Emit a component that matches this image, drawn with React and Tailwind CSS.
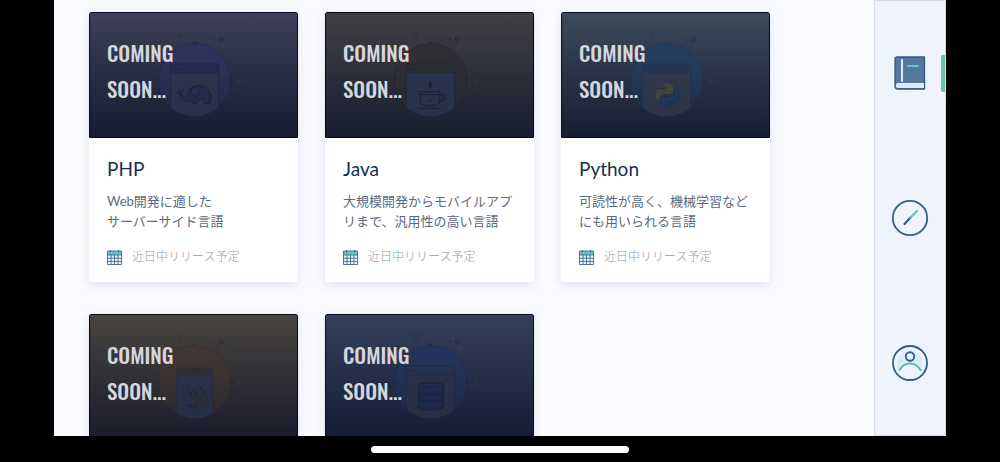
import React from "react";

function Elephant() {
  return (
    <g fill="#262c50" stroke="#191e3b" strokeWidth="1" strokeLinejoin="round">
      <path d="M98 84 C99 75 106 73 112 74 C119 75 122 80 122 86 L121 92 H116 L115 87 Q111 89 108 87 L108 92 H104 L103 88 C99 91 93 90 90 82 L92 81 C94 86 97 87 98 84Z" />
      <path d="M103 76 Q109 73 110 80 Q109 86 104 84 Q101 82 103 76Z" fill="#2b3055" />
      <path d="M121 81 L123 85" fill="none" />
      <path d="M91 81 L87 81 M91 81 L90 77 M92 81 L94 78" fill="none" strokeLinecap="round" />
    </g>
  );
}

function Cup() {
  return (
    <g fill="none" stroke="#1c2135" strokeWidth="1.3" strokeLinejoin="round" strokeLinecap="round">
      <path d="M95 80 H115 V88 Q115 94 109 94 H101 Q95 94 95 88Z" fill="#313650" />
      <path d="M95 83 H115 M115 83 Q120 82 120 86 Q119 90 114 90" />
      <path d="M95 97 H116" />
      <circle cx="105" cy="89" r="1.4" fill="#1c2135" stroke="none" />
      <path d="M105.500 69 C102 73 104 74 105.500 77.500 C108 74 107 72 105.500 69Z" fill="#1c2135" stroke="none" />
    </g>
  );
}

function Snakes() {
  return (
    <g strokeWidth="0.8">
      <path
        d="M100 72 Q106 69 111 72 Q113 73 113 76 V80 Q113 83 110 83 H103 Q99 83 99 87 V89 Q93 89 94 82 Q94 77 98 77 H105 V76 H99 Q98 73 100 72Z"
        fill="#4c4d3d"
        stroke="#27303d"
      />
      <path
        d="M112 95 Q106 98 101 95 Q99 94 99 91 V88 Q99 85 102 85 H109 Q113 85 113 81 V78 Q120 77 120 84 Q120 90 115 90 H107 V91 H113 Q114 94 112 95Z"
        fill="#223b60"
        stroke="#1c3153"
      />
      <circle cx="102" cy="74" r="0.900" fill="#1b2944" />
      <circle cx="110" cy="93" r="0.900" fill="#1b2944" />
    </g>
  );
}

function Bird() {
  return (
    <g fill="#2b2e3e" stroke="#22253b" strokeWidth="1" strokeLinejoin="round" strokeLinecap="round">
      <path d="M99 77 L110 85 L103 76 L114 84 Q114 78 111 73 Q121 79 118 90 L120 93 Q117 92 114 93 Q105 97 98 91 Q105 93 109 90 Q102 85 99 77Z" />
      <path d="M92 72 L97 77 M97 71 L102 75 M92 77 L95 80" fill="none" />
    </g>
  );
}

function Database() {
  return (
    <g fill="#1d2b50" stroke="#14203f" strokeWidth="1.1">
      <path d="M93 71 V94 Q106 99 119 94 V71Z" />
      <ellipse cx="106" cy="71" rx="13" ry="2" />
      <path d="M93 79 Q106 83 119 79 M93 86 Q106 90 119 86" fill="none" />
    </g>
  );
}

function Illustration({ id, disc, line, bar, page, phone, children }) {
  const x = phone ? 87 : 81;
  const w = phone ? 37 : 49;
  const y = phone ? 54 : 52;
  return (
    <svg viewBox="0 0 209 126" aria-hidden="true" className="absolute inset-0 h-full w-full opacity-75">
      <defs>
        <clipPath id={"disc-" + id}>
          <circle cx="105.500" cy="68" r="37" />
        </clipPath>
        <linearGradient id={"fade-" + id} x1="0" y1="0" x2="0" y2="1">
          <stop offset="0" stopColor={disc} />
          <stop offset="1" stopColor={disc} stopOpacity="0.350" />
        </linearGradient>
      </defs>
      <circle cx="105.500" cy="68" r="37" fill={"url(#fade-" + id + ")"} stroke={line} strokeOpacity="0.600" />
      <g clipPath={"url(#disc-" + id + ")"}>
        <rect x={x} y={y} width={w} height="60" rx="1" fill={page} stroke={line} strokeOpacity="0.600" />
        <rect x={x} y={y} width={w} height={phone ? 6 : 9} fill={bar} stroke={line} strokeOpacity="0.500" strokeWidth="0.800" />
        <path
          d={phone ? "M99 57 H101 M104 57 H112" : "M84 56.500 H86 M87.500 56.500 H89.500 M91 56.500 H93"}
          stroke={line}
          strokeWidth="1.2"
        />
      </g>
      {children}
      <g fill="none" stroke={line} strokeOpacity="0.800">
        <circle cx="90.700" cy="23.300" r="2.200" strokeOpacity="0.500" />
        <circle cx="132.700" cy="27" r="2" strokeWidth="1.200" />
      </g>
      <g fill={line}>
        <circle cx="105.700" cy="30.500" r="1.300" />
        <circle cx="125.300" cy="27.300" r="1" />
        <circle cx="69" cy="68" r="1.300" />
        <circle cx="142" cy="68" r="1.300" />
        <circle cx="150" cy="81.700" r="1.500" fillOpacity="0.700" />
      </g>
      <path d="M134.500 31 V37 M131.500 34 H137.500 M151 66 V72 M148 69 H154" stroke="#66708a" strokeOpacity="0.140" strokeWidth="1.500" />
    </svg>
  );
}

const courses = [
  {
    id: "php",
    title: "PHP",
    lines: ["Web開発に適した", "サーバーサイド言語"],
    cover: "border-[#0a0c25] bg-linear-to-b from-[#3d4057] to-[#171c33]",
    art: { disc: "#2e3260", line: "#1a1f40", bar: "#242950", page: "#303550" },
    Drawing: Elephant,
  },
  {
    id: "java",
    title: "Java",
    lines: ["大規模開発からモバイルアプリまで、汎用性の高い言語"],
    cover: "border-[#07080f] bg-linear-to-b from-[#414043] to-[#181d30]",
    art: { disc: "#302c31", line: "#201f28", bar: "#2b2a34", page: "#2a3654" },
    Drawing: Cup,
  },
  {
    id: "python",
    title: "Python",
    lines: ["可読性が高く、機械学習などにも用いられる言語"],
    cover: "border-[#080c24] bg-linear-to-b from-[#3c4a5c] to-[#171e34]",
    art: { disc: "#1f3e66", line: "#1b3052", bar: "#203756", page: "#34394d" },
    Drawing: Snakes,
  },
  {
    id: "swift",
    cover: "border-[#0a0a0e] bg-linear-to-b from-[#48443f] to-[#1b1c2c]",
    art: { disc: "#42362f", line: "#2c2829", bar: "#302f38", page: "#29324f", phone: true },
    Drawing: Bird,
  },
  {
    id: "database",
    cover: "border-[#080c26] bg-linear-to-b from-[#35405b] to-[#161d35]",
    art: { disc: "#1f3462", line: "#182747", bar: "#25344f", page: "#2c3348" },
    Drawing: Database,
  },
];

function CalendarIcon() {
  return (
    <svg viewBox="0 0 15 15" aria-hidden="true" className="h-[15px] w-[15px] shrink-0">
      <rect x="0.500" y="1.500" width="14" height="13" fill="#f2f8fc" />
      <rect x="0.500" y="1" width="14" height="4" fill="#6cc5bd" />
      <path
        d="M0.500 1 H14.500 V14.500 H0.500Z M0.500 5 H14.500 M0.500 8.200 H14.500 M0.500 11.400 H14.500 M4 5 V14.500 M7.500 5 V14.500 M11 5 V14.500"
        fill="none"
        stroke="#42668c"
        strokeWidth="0.900"
      />
      <path d="M3.500 0 V2.500 M11.500 0 V2.500" stroke="#42668c" />
    </svg>
  );
}

function CourseCard({ course }) {
  const { id, title, lines, cover, art, Drawing } = course;
  return (
    <article className="overflow-hidden rounded-[2px] bg-white shadow-[0_3px_10px_rgba(40,60,90,0.13)]">
      <div className={"relative rounded-t-[2px] border " + cover}>
        <Illustration id={id} {...art}>
          <Drawing />
        </Illustration>
        <p className="relative px-[17px] pt-[22px] pb-[30px] font-['Oswald','Liberation_Sans_Narrow','Roboto_Condensed','Liberation_Sans',sans-serif] text-[21px] leading-9 font-medium text-[#d5d6dc]">
          COMING
          <br />
          SOON...
        </p>
      </div>
      {title && (
        <div className="px-[18px] pt-[17px] pb-[17px]">
          <h2 className="text-[19px] leading-7 text-[#16304f]">{title}</h2>
          <p className="mt-2 text-[13px] leading-5 text-[#5b6a7e]">
            {lines.map((line) => (
              <span key={line} className="block break-all">
                {line}
              </span>
            ))}
          </p>
          <p className="mt-[18px] flex items-center gap-[10px] text-[12px] leading-4 font-light text-[#8f9bab]">
            <CalendarIcon />
            近日中リリース予定
          </p>
        </div>
      )}
    </article>
  );
}

function BookIcon() {
  return (
    <svg viewBox="0 0 32 34" aria-hidden="true" className="h-[34px] w-8">
      <path d="M3 1 H30.500 V33 H4 Q1 33 1 30 V3 Q1 1 3 1Z" fill="#54789f" stroke="#325a86" strokeWidth="1.300" strokeLinejoin="round" />
      <path d="M4 27 H30 V32 H4 Q1.800 32 1.800 29.500 Q1.800 27 4 27Z" fill="#dcebf8" />
      <path d="M8 4 V25" stroke="#dcebf8" strokeWidth="2" strokeLinecap="round" />
      <path d="M14 10 H24" stroke="#6cc6cb" strokeWidth="2.200" strokeLinecap="round" />
    </svg>
  );
}

function CompassIcon() {
  return (
    <svg viewBox="0 0 38 38" fill="none" aria-hidden="true" className="h-[38px] w-[38px]">
      <circle cx="19" cy="19" r="17.200" stroke="#2f5f8c" strokeWidth="1.800" />
      <path d="M13.500 25 L19.500 18.500" stroke="#2f5f8c" strokeWidth="2.200" strokeLinecap="round" />
      <path d="M19.500 18.500 L26 12" stroke="#67bfc0" strokeWidth="2.200" strokeLinecap="round" />
    </svg>
  );
}

function ProfileIcon() {
  return (
    <svg viewBox="0 0 38 38" fill="none" aria-hidden="true" className="h-[38px] w-[38px]">
      <path d="M8 26 A13 13 0 1 1 30 26 Q19 14 8 26Z" fill="#dcebfa" />
      <circle cx="19" cy="19" r="17" stroke="#2f5f8c" strokeWidth="1.800" />
      <circle cx="19" cy="12.500" r="4.200" stroke="#2f5f8c" strokeWidth="1.900" fill="#eff3fb" />
      <path d="M8.500 26 Q12.500 19.500 19 19.500 Q25.500 19.500 29.500 26" stroke="#62bbb8" strokeWidth="2.200" strokeLinecap="round" />
    </svg>
  );
}

const tabs = [
  { label: "レッスン", Icon: BookIcon, active: true },
  { label: "見つける", Icon: CompassIcon },
  { label: "プロフィール", Icon: ProfileIcon },
];

export default function App() {
  return (
    <div className="flex h-screen flex-col overflow-hidden bg-black font-['Lato','Noto_Sans_CJK_JP',sans-serif]">
      <div className="mx-[54px] flex min-h-0 flex-1">
        <main className="min-w-0 flex-1 overflow-hidden bg-[#fafbff] pt-3 pl-[35px]">
          <div className="grid grid-cols-[repeat(auto-fill,209px)] gap-x-[27px] gap-y-8">
            {courses.map((course) => (
              <CourseCard key={course.id} course={course} />
            ))}
          </div>
        </main>
        <nav className="flex w-[72px] shrink-0 flex-col border border-[#d9dde5] bg-[#eff3fb]">
          {tabs.map(({ label, Icon, active }) => (
            <button
              key={label}
              type="button"
              aria-label={label}
              aria-current={active ? "page" : undefined}
              className="relative flex flex-1 items-center justify-center"
            >
              <Icon />
              {active && <span className="absolute right-0 h-[37px] w-1 rounded-l-[2px] bg-[#67bfae]" />}
            </button>
          ))}
        </nav>
      </div>
      <div className="flex h-[26px] shrink-0 items-center justify-center">
        <div className="h-[7px] w-[258px] rounded-full bg-white" />
      </div>
    </div>
  );
}
